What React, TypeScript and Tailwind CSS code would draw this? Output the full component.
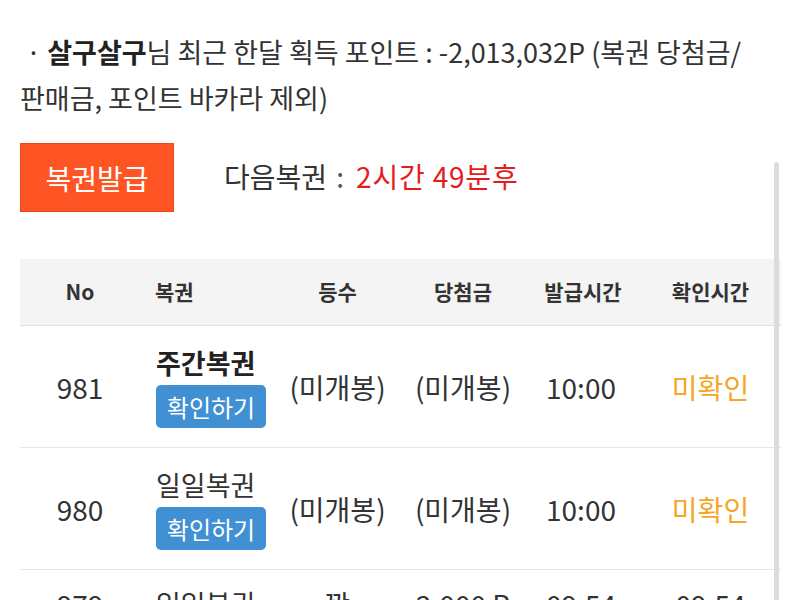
import React from "react";

const rows = [
  { no: "981", name: "주간복권", bold: true, rank: "(미개봉)", prize: "(미개봉)", issued: "10:00", checked: "미확인", pending: true },
  { no: "980", name: "일일복권", bold: false, rank: "(미개봉)", prize: "(미개봉)", issued: "10:00", checked: "미확인", pending: true },
  { no: "979", name: "일일복권", bold: false, rank: "꽝", prize: "2,000 P", issued: "09:54", checked: "09:54", pending: false },
];

export default function App() {
  return (
    <div
      className="relative w-[800px] h-[600px] overflow-hidden bg-white text-[#333]"
      style={{ fontFamily: '"Noto Sans CJK KR", "Noto Sans", sans-serif' }}
    >
      <p className="pl-[20px] pr-[10px] pt-[29px] text-[27px] leading-[46px]">
        <span className="pl-[6px]">· </span>
        <b className="font-bold text-[#222]">살구살구</b>님 최근 한달 획득 포인트 : -2,013,032P (복권 당첨금/
        <br />
        판매금, 포인트 바카라 제외)
      </p>

      <div className="flex items-center mt-[22px] pl-[20px]">
        <button className="w-[154px] h-[69px] bg-[#ff5424] border border-[#e84a1c] text-white text-[28px] flex items-center justify-center">
          복권발급
        </button>
        <div className="ml-[50px] text-[28px] -mt-[4px] whitespace-nowrap">
          다음복권 <span className="text-[#555] ml-[3px]">:</span>
          <span className="text-[#e61b1b] ml-[12px] tracking-[0.8px]">2시간 49분후</span>
        </div>
      </div>

      <div className="mt-[47px] ml-[20px] w-[761px]">
        <div className="grid grid-cols-[120px_135px_125px_126px_114px_141px] h-[67px] items-center bg-[#f4f4f4] border-b border-[#dedede] text-[21px] font-bold text-[#333]">
          <div className="text-center">No</div>
          <div className="pl-[15px]">복권</div>
          <div className="text-center">등수</div>
          <div className="text-center">당첨금</div>
          <div className="text-center">발급시간</div>
          <div className="text-center">확인시간</div>
        </div>
        {rows.map((r) => (
          <div
            key={r.no}
            className={
              r.pending
                ? "grid grid-cols-[120px_135px_125px_126px_114px_141px] h-[122px] items-center border-b border-[#e6e6e6] text-[28px] leading-[34px] text-[#333]"
                : "grid grid-cols-[120px_135px_125px_126px_114px_141px] pt-[16px] pb-[16px] items-center border-b border-[#e6e6e6] text-[28px] leading-[34px] text-[#333]"
            }
          >
            <div className="text-center">{r.no}</div>
            <div className="pl-[16px] flex flex-col items-start pt-[1px]">
              <div className={r.bold ? "font-bold text-[27px] leading-[34px] text-[#222]" : "text-[27px] leading-[34px]"}>{r.name}</div>
              {r.pending && (
                <button className="mt-[5px] w-[110px] h-[43px] rounded-[5px] bg-[#4190d3] text-white text-[24px] flex items-center justify-center">
                  확인하기
                </button>
              )}
            </div>
            <div className="text-center whitespace-nowrap">{r.rank}</div>
            <div className="text-center whitespace-nowrap">{r.prize}</div>
            <div className="text-center -ml-[4px]">{r.issued}</div>
            <div className={r.pending ? "text-center text-[#f5a623]" : "text-center"}>{r.checked}</div>
          </div>
        ))}
      </div>

      <div className="absolute left-[774px] top-[162px] w-[5px] h-[460px] rounded-full bg-[#dcdcdc]" />
    </div>
  );
}
